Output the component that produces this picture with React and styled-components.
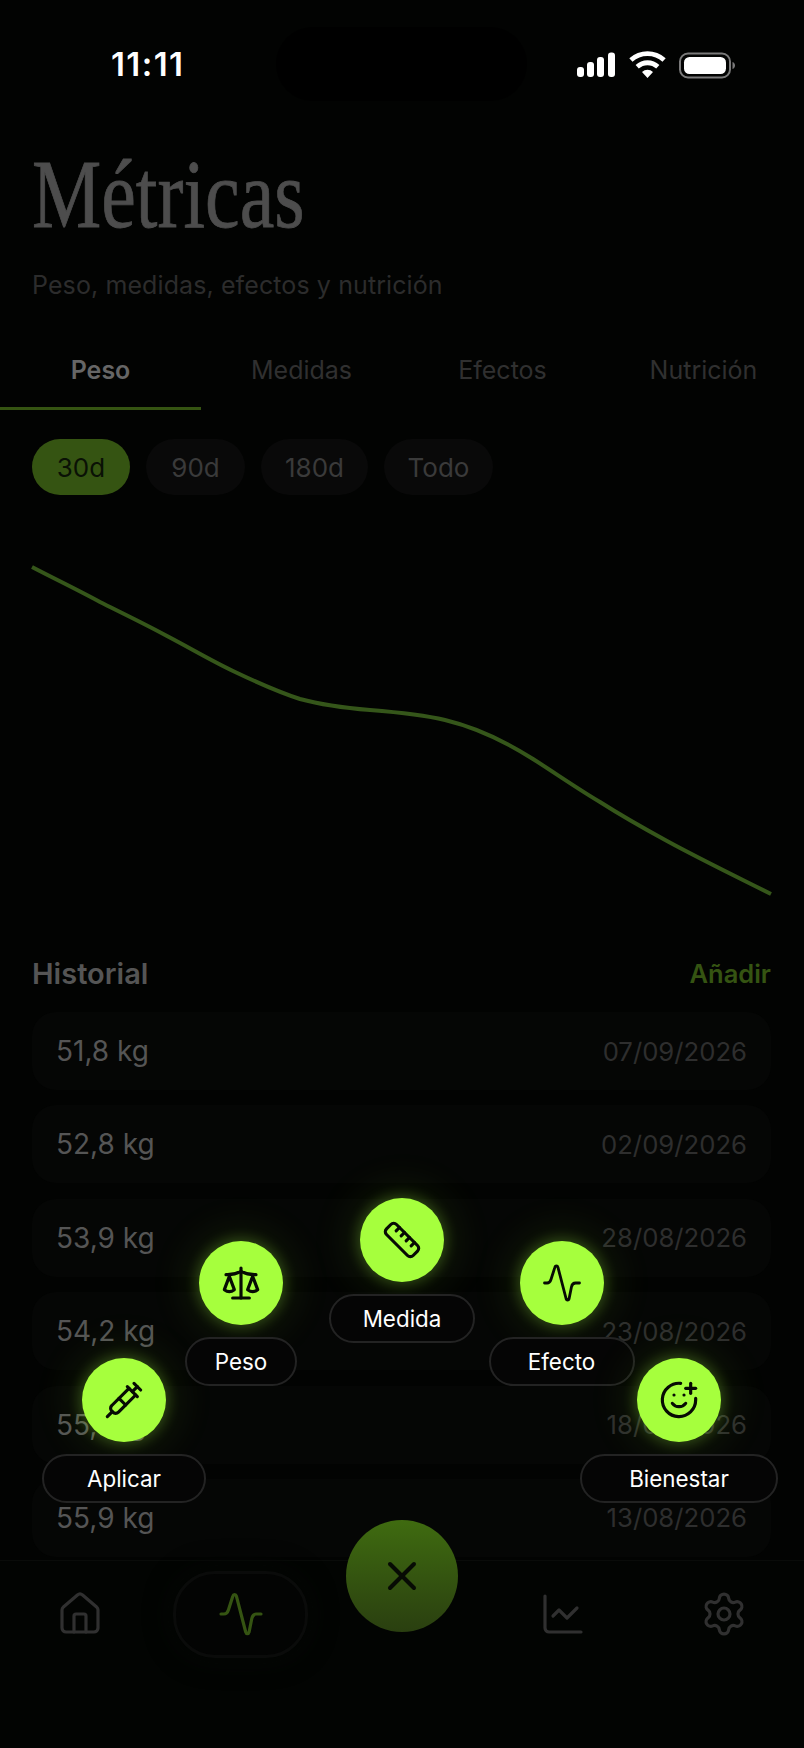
import React from "react";
import styled, { createGlobalStyle } from "styled-components";
import { House, ChartLine, Settings, Scale, Syringe, Ruler, SmilePlus, X } from "lucide-react";

const Global = createGlobalStyle`
  html, body { margin: 0; padding: 0; background: #020302; }
  * { box-sizing: border-box; }
`;

const SANS = `"Inter", "Liberation Sans", sans-serif`;

const Page = styled.div`
  position: relative;
  width: 804px;
  height: 1748px;
  overflow: hidden;
  background: #020302;
  font-family: ${SANS};
  display: flex;
  flex-direction: column;
`;

const StatusBar = styled.div`
  position: relative;
  height: 148px;
  flex: none;
`;
const Time = styled.div`
  position: absolute;
  left: 111px;
  top: 44px;
  font-size: 33px;
  line-height: 40px;
  font-weight: 600;
  color: #fff;
  letter-spacing: 1.4px;
`;
const Island = styled.div`
  position: absolute;
  left: 276px;
  top: 27px;
  width: 251px;
  height: 74px;
  border-radius: 37px;
  background: #000;
`;
const StatusIcons = styled.svg`
  position: absolute;
  left: 570px;
  top: 45px;
`;

const Title = styled.h1`
  margin: 0 0 0 32px;
  font-family: "Liberation Serif", serif;
  font-weight: 400;
  font-size: 98px;
  line-height: 92px;
  color: #4d4d4d;
  -webkit-text-stroke: 0.8px #4d4d4d;
  transform: scaleX(0.795);
  transform-origin: left center;
  white-space: nowrap;
`;
const Subtitle = styled.p`
  margin: 30px 0 0 32px;
  font-size: 25px;
  line-height: 30px;
  letter-spacing: 0.1px;
  color: #2c2c2c;
  white-space: nowrap;
`;

const Tabs = styled.div`
  margin-top: 30px;
  display: grid;
  grid-template-columns: repeat(4, 1fr);
`;
const Tab = styled.div`
  height: 80px;
  display: flex;
  align-items: center;
  justify-content: center;
  font-size: 25px;
  font-weight: ${(p) => (p.$active ? 600 : 400)};
  color: ${(p) => (p.$active ? "#666" : "#303030")};
  box-shadow: ${(p) => (p.$active ? "inset 0 -3px 0 #355412" : "none")};
`;

const Ranges = styled.div`
  margin: 29px 0 0 32px;
  display: flex;
  gap: 16px;
`;
const Range = styled.div`
  width: ${(p) => p.$w}px;
  height: 56px;
  border-radius: 28px;
  display: flex;
  align-items: center;
  justify-content: center;
  font-size: 26px;
  background: ${(p) => (p.$active ? "#355412" : "#090909")};
  color: ${(p) => (p.$active ? "#0a1105" : "#3a3a3a")};
`;

const Chart = styled.svg`
  display: block;
  flex: none;
`;

const HistoryHead = styled.div`
  height: 34px;
  margin: 0 33px 0 32px;
  display: flex;
  align-items: center;
  justify-content: space-between;
`;
const HistoryTitle = styled.div`
  font-size: 29px;
  font-weight: 600;
  color: #555;
`;
const Add = styled.div`
  font-size: 25.5px;
  font-weight: 600;
  color: #355412;
`;

const Rows = styled.div`
  margin: 22px 33px 0 32px;
  display: flex;
  flex-direction: column;
  gap: 15.4px;
`;
const Row = styled.div`
  height: 78px;
  padding: 0 24px 0 24px;
  border-radius: 24px;
  background: #050605;
  display: flex;
  align-items: center;
  justify-content: space-between;
`;
const Weight = styled.div`
  font-size: 28px;
  color: #555;
`;
const DateText = styled.div`
  font-size: 25.7px;
  color: #2e2e2e;
`;

const Nav = styled.nav`
  position: relative;
  margin-top: 3px;
  flex: 1;
  padding-top: 10px;
  border-top: 1px solid #090b09;
  background: #020402;
  display: grid;
  grid-template-columns: repeat(5, 1fr);
  align-items: start;
`;
const NavCell = styled.div`
  height: 87px;
  display: flex;
  align-items: center;
  justify-content: center;
  color: #303030;
`;
const ActivePill = styled.div`
  width: 135px;
  height: 87px;
  margin-left: -2px;
  border-radius: 42px;
  display: flex;
  align-items: center;
  justify-content: center;
  color: #355412;
  background: #030403;
  border: 3px solid #0a0b0a;
  box-shadow: 0 0 22px 6px #040604;
`;
const ActiveGlyph = styled.span`
  display: flex;
  margin-left: 2px;
`;
const Fab = styled.div`
  position: absolute;
  left: 346px;
  top: -41px;
  width: 112px;
  height: 112px;
  border-radius: 50%;
  background: linear-gradient(180deg, #3f6b10 0%, #2a3f10 100%);
  display: flex;
  align-items: center;
  justify-content: center;
  color: #070b04;
`;

const Fan = styled.div`
  position: absolute;
  left: ${(p) => p.$x}px;
  top: ${(p) => p.$y - 42}px;
  transform: translateX(-50%);
  display: flex;
  flex-direction: column;
  align-items: center;
  gap: 12px;
`;
const FanButton = styled.div`
  width: 84px;
  height: 84px;
  border-radius: 50%;
  background: #a6ff3d;
  color: #070b04;
  display: flex;
  align-items: center;
  justify-content: center;
  box-shadow: 0 0 14px 2px rgba(166, 255, 61, 0.26), 0 0 40px 14px rgba(166, 255, 61, 0.08);
`;
const FanLabel = styled.div`
  width: ${(p) => p.$w}px;
  height: 49px;
  border-radius: 25px;
  background: #050505;
  border: 2px solid #232323;
  color: #fff;
  font-size: 22.4px;
  font-weight: 400;
  display: flex;
  align-items: center;
  justify-content: center;
`;

const Pulse = ({ size, sw = 3.2 }) => (
  <svg width={size} height={size} viewBox="0 0 48 48" fill="none" stroke="currentColor" strokeWidth={sw} strokeLinecap="round" strokeLinejoin="round">
    <path d="M4 24h3c2.5 0 3.6-1.5 4.4-4L15.8 6.2c.6-2.2 3-2.2 3.6 0L28.7 42c.6 2.1 2.8 2.1 3.4 0l2.7-13.5c.6-2.8 2-4.5 4.7-4.5H44" />
  </svg>
);

const fan = [
  { x: 124, y: 1400, w: 164, label: "Aplicar", icon: <Syringe size={40} strokeWidth={1.9} /> },
  { x: 241, y: 1283, w: 112, label: "Peso", icon: <Scale size={40} strokeWidth={1.9} /> },
  { x: 402, y: 1240, w: 146, label: "Medida", icon: <Ruler size={40} strokeWidth={1.9} /> },
  { x: 561.5, y: 1283, w: 146, label: "Efecto", icon: <Pulse size={42} /> },
  { x: 679, y: 1400, w: 198, label: "Bienestar", icon: <SmilePlus size={40} strokeWidth={1.9} /> },
];

const history = [
  ["51,8 kg", "07/09/2026"],
  ["52,8 kg", "02/09/2026"],
  ["53,9 kg", "28/08/2026"],
  ["54,2 kg", "23/08/2026"],
  ["55,1 kg", "18/08/2026"],
  ["55,9 kg", "13/08/2026"],
];

export default function App() {
  return (
    <Page>
      <Global />
      <StatusBar>
        <Time>11:11</Time>
        <Island />
        <StatusIcons width="170" height="40" viewBox="0 0 170 40" fill="#fff">
          <rect x="7" y="22" width="7" height="10" rx="3" />
          <rect x="17" y="17" width="7" height="15" rx="3" />
          <rect x="27" y="12" width="7" height="20" rx="3" />
          <rect x="38" y="7.5" width="7" height="24.5" rx="3" />
          <path d="M77.5 33l-5.5-6a8 8 0 0 1 11 0zM68.8 23.5l-3.2-3.5a17.500 17.500 0 0 1 23.800 0l-3.200 3.500a13 13 0 0 0-17.400 0zM62.500 16.700l-3.200-3.500a27 27 0 0 1 36.400 0l-3.200 3.500a22.500 22.500 0 0 0-30 0z" />
          <rect x="110" y="8.500" width="50" height="24" rx="8" fill="none" stroke="#7a7a7a" strokeWidth="2" />
          <rect x="114" y="12" width="42" height="17" rx="5.500" />
          <path d="M162.500 17v7c1.800-.6 2.500-2 2.500-3.500s-.7-2.900-2.500-3.500z" fill="#7a7a7a" />
        </StatusIcons>
      </StatusBar>

      <Title>Métricas</Title>
      <Subtitle>Peso, medidas, efectos y nutrición</Subtitle>

      <Tabs>
        <Tab $active>Peso</Tab>
        <Tab>Medidas</Tab>
        <Tab>Efectos</Tab>
        <Tab>Nutrición</Tab>
      </Tabs>

      <Ranges>
        <Range $active $w={98}>30d</Range>
        <Range $w={99}>90d</Range>
        <Range $w={107}>180d</Range>
        <Range $w={109}>Todo</Range>
      </Ranges>

      <Chart width="804" height="461" viewBox="0 495 804 461" fill="none">
        <path
          d="M32 567 C 55 579, 78 590, 100 602 C 122 613, 145 624, 167 636 C 190 648, 210 660, 233 671 C 256 682, 278 692, 300 699 C 322 705, 345 708, 370 710 C 395 712, 420 714, 445 720 C 470 726, 500 738, 533 759 C 555 773, 578 789, 600 802 C 622 816, 645 829, 667 841 C 700 859, 735 876, 771 894"
          stroke="#35561a"
          strokeWidth="4"
        />
      </Chart>

      <HistoryHead>
        <HistoryTitle>Historial</HistoryTitle>
        <Add>Añadir</Add>
      </HistoryHead>

      <Rows>
        {history.map(([w, d]) => (
          <Row key={d}>
            <Weight>{w}</Weight>
            <DateText>{d}</DateText>
          </Row>
        ))}
      </Rows>

      <Nav>
        <NavCell><House size={48} strokeWidth={1.6} /></NavCell>
        <NavCell>
          <ActivePill><ActiveGlyph><Pulse size={48} /></ActiveGlyph></ActivePill>
        </NavCell>
        <NavCell />
        <NavCell><ChartLine size={48} strokeWidth={1.6} /></NavCell>
        <NavCell><Settings size={48} strokeWidth={1.6} /></NavCell>
        <Fab><X size={48} strokeWidth={2} /></Fab>
      </Nav>

      {fan.map((f) => (
        <Fan key={f.label} $x={f.x} $y={f.y}>
          <FanButton>{f.icon}</FanButton>
          <FanLabel $w={f.w}>{f.label}</FanLabel>
        </Fan>
      ))}
    </Page>
  );
}
